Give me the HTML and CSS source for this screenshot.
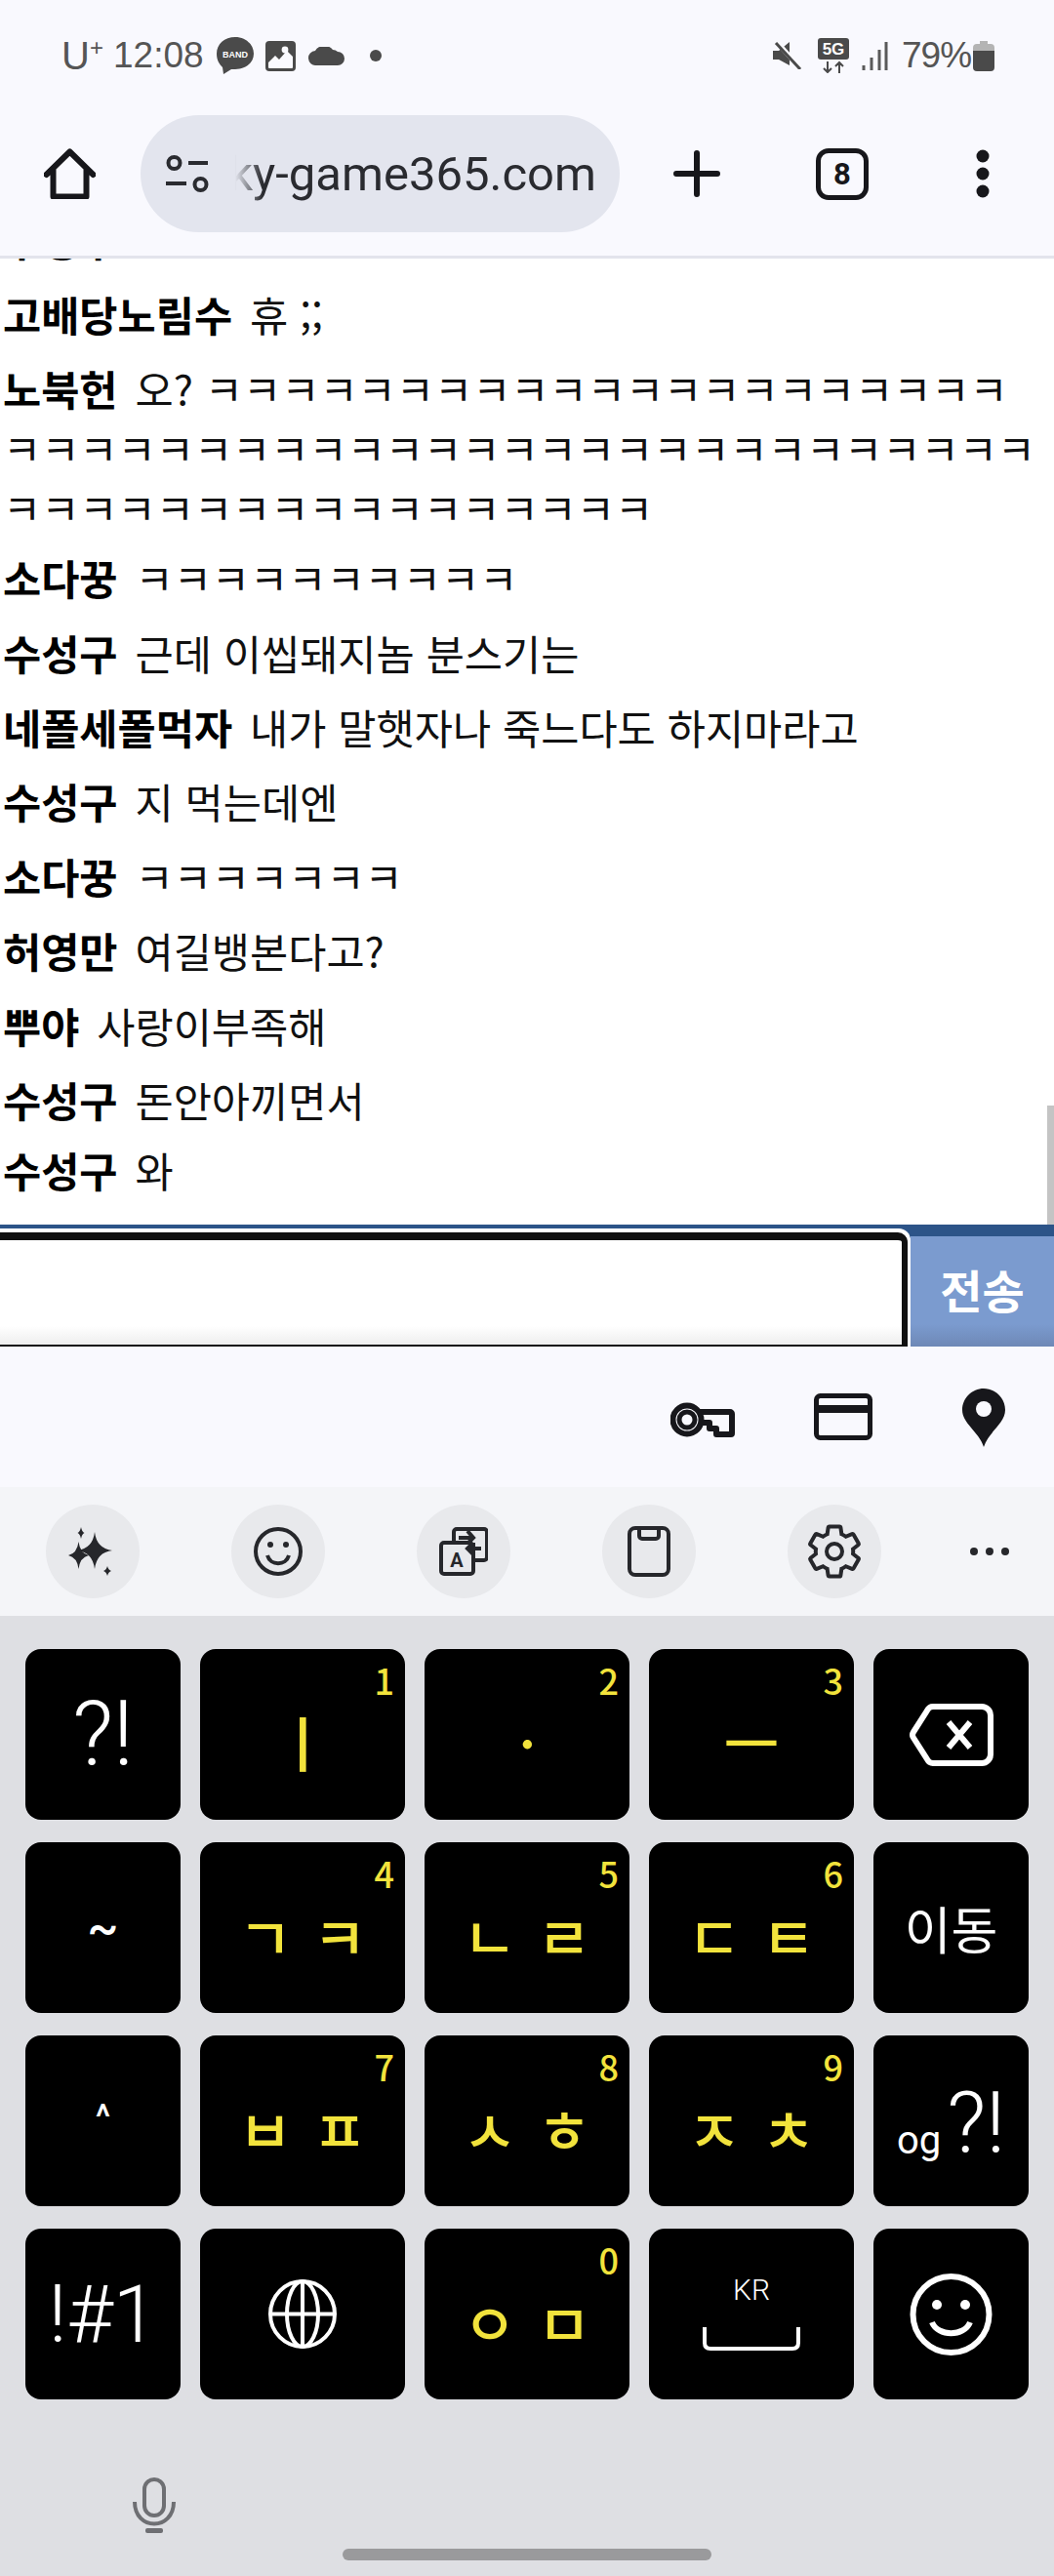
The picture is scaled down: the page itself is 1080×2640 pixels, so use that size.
FILE: index.html
```html
<!DOCTYPE html>
<html lang="ko">
<head>
  <meta charset="UTF-8" />
  <title>sky-game365.com</title>
  <link rel="stylesheet" href="styles.css">
</head>
<body>
  <div class="phone">
    <header class="browser">
      <div class="status">
        <span class="carrier">U<sup>+</sup></span>
        <span class="clock">12:08</span>
        <svg class="st-band" viewBox="0 0 38 38" width="38" height="38"><path d="M19 0C8 0 0 7 0 17c0 7 3 11 6 14l1 7 8-5c1 0 3 0 4 0 11 0 19-7 19-16S30 0 19 0Z" fill="#4a4a4a"/><text x="19" y="21" text-anchor="middle" class="band-text">BAND</text></svg>
        <svg class="st-img" viewBox="0 0 31 31" width="31" height="31"><rect width="31" height="31" rx="4" fill="#4a4a4a"/><rect x="3" y="3" width="25" height="25" rx="1" fill="#fafaff"/><path d="M3 3h25v13l-6-6-8 9-4-4-7 7Z" fill="#4a4a4a"/><circle cx="20" cy="9" r="3.4" fill="#fafaff"/></svg>
        <svg class="st-cloud" viewBox="0 0 37 19" width="37" height="19"><path d="M8 19a7.5 7.5 0 0 1-1-15A11 11 0 0 1 25 3a8 8 0 0 1 5 2 7 7 0 0 1 0 14Z" fill="#4a4a4a"/></svg>
        <span class="st-dot"></span>
        <span class="status-gap"></span>
        <svg class="st-mute" viewBox="0 0 30 28" width="30" height="28"><path d="M0 9h6l11-9v24L6 18H0Z" fill="#4a4a4a"/><path d="M4 0l24 27" stroke="#fafaff" stroke-width="5"/><path d="M3 1l25 27" stroke="#4a4a4a" stroke-width="3"/></svg>
        <svg class="st-5g" viewBox="0 0 32 36" width="32" height="36"><rect width="32" height="22" rx="3" fill="#4a4a4a"/><text x="16" y="17" text-anchor="middle" class="g-text">5G</text><path d="M10 24v11M6 31l4 4 4-4M22 36V25M18 29l4-4 4 4" fill="none" stroke="#4a4a4a" stroke-width="2"/></svg>
        <svg class="st-signal" viewBox="0 0 27 29" width="27" height="29"><path d="M2 29v-5M10 29V16M18 29V8M25 29V0" stroke="#5a5a5a" stroke-width="3"/></svg>
        <span class="battery-text">79%</span>
        <svg class="st-batt" viewBox="0 0 22 31" width="22" height="31"><path d="M7 0h8v3h3a4 4 0 0 1 4 4v5H0V7a4 4 0 0 1 4-4h3Z" fill="#b4b4b4"/><path d="M0 10h22v17a4 4 0 0 1-4 4H4a4 4 0 0 1-4-4Z" fill="#4a4a4a"/></svg>
      </div>
      <nav class="toolbar">
        <svg class="ic-home" viewBox="0 0 53 52" width="53" height="52"><path d="M2.5 27 26.5 3.500 50.5 27M9.5 21v28.500h34V21" fill="none" stroke="#17171b" stroke-width="6" stroke-linejoin="round" stroke-linecap="round"/></svg>
        <div class="pill">
          <svg class="ic-tune" viewBox="0 0 45 38" width="45" height="38"><circle cx="8.500" cy="8" r="6" fill="none" stroke="#2a2b30" stroke-width="4"/><path d="M23 8h20M0 29h21" stroke="#2a2b30" stroke-width="4"/><circle cx="35.500" cy="30" r="6" fill="none" stroke="#2a2b30" stroke-width="4"/></svg>
          <div class="url"><span>sky-game365.com</span></div>
        </div>
        <svg class="ic-plus" viewBox="0 0 48 48" width="48" height="48"><path d="M24 3v42M3 24h42" stroke="#17171b" stroke-width="6" stroke-linecap="round"/></svg>
        <div class="tabs">8</div>
        <svg class="ic-more" viewBox="0 0 14 50" width="14" height="50"><circle cx="7" cy="7" r="6.500"/><circle cx="7" cy="25" r="6.500"/><circle cx="7" cy="43" r="6.500"/></svg>
      </nav>
    </header>

    <main class="chat">
      <p class="msg"><b>수성구</b> ㅋ?</p>
      <p class="msg"><b>고배당노림수</b> 휴 ;;</p>
      <p class="msg tight"><b>노북헌</b> 오? ㅋㅋㅋㅋㅋㅋㅋㅋㅋㅋㅋㅋㅋㅋㅋㅋㅋㅋㅋㅋㅋㅋㅋㅋㅋㅋㅋㅋㅋㅋㅋㅋㅋㅋㅋㅋㅋㅋㅋㅋㅋㅋㅋㅋㅋㅋㅋㅋㅋㅋㅋㅋㅋㅋㅋㅋㅋㅋㅋㅋㅋㅋㅋㅋㅋ</p>
      <p class="msg"><b>소다꿍</b> ㅋㅋㅋㅋㅋㅋㅋㅋㅋㅋ</p>
      <p class="msg"><b>수성구</b> 근데 이씹돼지놈 분스기는</p>
      <p class="msg"><b>네폴세폴먹자</b> 내가 말햇자나 죽느다도 하지마라고</p>
      <p class="msg"><b>수성구</b> 지 먹는데엔</p>
      <p class="msg"><b>소다꿍</b> ㅋㅋㅋㅋㅋㅋㅋ</p>
      <p class="msg"><b>허영만</b> 여길뱅본다고?</p>
      <p class="msg"><b>뿌야</b> 사랑이부족해</p>
      <p class="msg tight"><b>수성구</b> 돈안아끼면서</p>
      <p class="msg last"><b>수성구</b> 와</p>
      <div class="scroll-thumb"></div>
    </main>

    <form class="send-bar">
      <div class="input-wrap"><div class="input-box"></div></div>
      <div class="send-btn">전송</div>
    </form>

    <div class="autofill">
      <svg class="ic-key" viewBox="0 0 66 36" width="66" height="36"><circle cx="17" cy="18" r="8" fill="none" stroke="#17171b" stroke-width="5"/><circle cx="17" cy="18" r="14.500" fill="none" stroke="#17171b" stroke-width="6"/><path d="M30 10h31a2 2 0 0 1 2 2v20a1 1 0 0 1-1 1H47v-6h-7v-6H31" fill="none" stroke="#17171b" stroke-width="6" stroke-linejoin="round"/></svg>
      <svg class="ic-card" viewBox="0 0 60 48" width="60" height="48"><rect x="2.500" y="2.500" width="55" height="43" rx="4" fill="none" stroke="#17171b" stroke-width="5"/><rect x="2" y="12" width="56" height="8" fill="#17171b"/></svg>
      <svg class="ic-pin" viewBox="0 0 44 60" width="44" height="60"><path d="M22 0C10 0 0 10 0 22c0 14 17 22 22 38 5-16 22-24 22-38C44 10 34 0 22 0Z" fill="#17171b"/><circle cx="22" cy="21" r="8" fill="#f9f9fe"/></svg>
    </div>

    <div class="kb-tools">
      <span class="tool"><svg viewBox="0 0 50 52" width="50" height="52" class="ink"><path d="M27 6Q29 23 45 25 29 27 27 44 25 27 9 25 25 23 27 6Z"/><path d="M10.500 16Q12 28 21 30 12 32 10.500 44 9 32 0 30 9 28 10.500 16Z"/><path d="M13 1Q14 6 16.500 7 14 8 13 13 12 8 9.500 7 12 6 13 1Z"/><path d="M40 41Q41 45 44 46 41 47 40 51 39 47 36 46 39 45 40 41Z"/></svg></span>
      <span class="tool"><svg viewBox="0 0 50 52" width="50" height="52" class="line"><circle cx="25" cy="26" r="23"/><path d="M14 30c3 11 19 11 22 0"/><circle class="eye" cx="17" cy="19" r="3"/><circle class="eye" cx="33" cy="19" r="3"/></svg></span>
      <span class="tool"><svg viewBox="0 0 50 50" width="50" height="50" class="line"><path d="M15 14V5a3 3 0 0 1 3-3h28a3 3 0 0 1 3 3v26a3 3 0 0 1-3 3h-9M20 11h14M29 4l6 7-6 6"/><path d="M35 16v29a3 3 0 0 1-3 3H5a3 3 0 0 1-3-3V19a3 3 0 0 1 3-3h26M43 22H30M35 16l-6 6 6 6"/><text x="18" y="41" text-anchor="middle" class="a-text">A</text></svg></span>
      <span class="tool"><svg viewBox="0 0 44 52" width="44" height="52" class="line"><rect x="2" y="2" width="40" height="48" rx="6"/><path d="M12 2v8a3 3 0 0 0 3 3h14a3 3 0 0 0 3-3V2"/></svg></span>
      <span class="tool"><svg viewBox="0 0 24 24" width="64" height="64" class="line thin"><path d="M19.140 12.940c.04-.3.06-.61.06-.94 0-.32-.02-.64-.07-.94l2.030-1.580a.49.49 0 0 0 .12-.61l-1.920-3.320a.488.488 0 0 0-.59-.22l-2.390.96c-.5-.38-1.030-.7-1.620-.94l-.36-2.540a.484.484 0 0 0-.48-.41h-3.840c-.24 0-.43.17-.47.41l-.36 2.540c-.59.24-1.130.57-1.620.94l-2.390-.96c-.22-.08-.47 0-.59.22L2.740 8.870c-.12.21-.08.47.12.61l2.030 1.580c-.05.3-.09.63-.09.94s.02.64.07.94l-2.030 1.580a.49.49 0 0 0-.12.61l1.920 3.320c.12.22.37.29.59.22l2.390-.96c.5.38 1.030.7 1.620.94l.36 2.540c.05.24.24.41.48.41h3.840c.24 0 .44-.17.47-.41l.36-2.540c.59-.24 1.130-.56 1.620-.94l2.390.96c.22.08.47 0 .59-.22l1.920-3.320c.12-.22.07-.47-.12-.61l-2.010-1.580z"/><circle cx="12" cy="12" r="3"/></svg></span>
      <svg class="tool-more" viewBox="0 0 42 10" width="42" height="10"><circle cx="5" cy="5" r="4"/><circle cx="21" cy="5" r="4"/><circle cx="37" cy="5" r="4"/></svg>
    </div>

    <section class="keyboard">
      <div class="keys">
        <div class="key white qm">?!</div>
        <div class="key jamo single"><i>1</i><span>ㅣ</span></div>
        <div class="key jamo single"><i>2</i><span>ㆍ</span></div>
        <div class="key jamo single"><i>3</i><span>ㅡ</span></div>
        <div class="key"><svg viewBox="0 0 86 64" width="86" height="64" class="key-line"><path d="M24 3h50a9 9 0 0 1 9 9v40a9 9 0 0 1-9 9H24q-4 0-6-4L4 35q-2-3 0-6L18 7q2-4 6-4Z"/><path d="M40 19 62 45M62 19 40 45"/></svg></div>

        <div class="key white tilde">~</div>
        <div class="key jamo"><i>4</i><span>ㄱ</span><span>ㅋ</span></div>
        <div class="key jamo"><i>5</i><span>ㄴ</span><span>ㄹ</span></div>
        <div class="key jamo"><i>6</i><span>ㄷ</span><span>ㅌ</span></div>
        <div class="key white move">이동</div>

        <div class="key white caret">^</div>
        <div class="key jamo"><i>7</i><span>ㅂ</span><span>ㅍ</span></div>
        <div class="key jamo"><i>8</i><span>ㅅ</span><span>ㅎ</span></div>
        <div class="key jamo"><i>9</i><span>ㅈ</span><span>ㅊ</span></div>
        <div class="key white punct"><small>og</small><span>?!</span></div>

        <div class="key white sym">!#1</div>
        <div class="key"><svg viewBox="0 0 70 71" width="70" height="71" class="key-line thin"><ellipse cx="35" cy="35.500" rx="33" ry="33.500"/><ellipse cx="35" cy="35.500" rx="16" ry="33.500"/><path d="M35 2v67M2 35.500h66"/></svg></div>
        <div class="key jamo"><i>0</i><span>ㅇ</span><span>ㅁ</span></div>
        <div class="key space">
          <span class="lang">KR</span>
          <svg viewBox="0 0 100 24" width="100" height="24" class="key-line thin"><path d="M2 0v16q0 6 6 6h84q6 0 6-6V0"/></svg>
        </div>
        <div class="key"><svg viewBox="0 0 85 84" width="85" height="84" class="key-line"><circle cx="42.500" cy="42" r="39"/><path d="M23 50c6 15 33 15 39 0"/><circle class="eye" cx="28" cy="32" r="5"/><circle class="eye" cx="57" cy="32" r="5"/></svg></div>
      </div>
      <svg class="ic-mic" viewBox="0 0 44 57" width="44" height="57"><rect x="12" y="2" width="20" height="37" rx="10" fill="none" stroke="#6e6f73" stroke-width="4"/><path d="M2 25c0 30 40 30 40 0" fill="none" stroke="#6e6f73" stroke-width="4"/><rect x="13" y="52" width="18" height="5" rx="2" fill="#6e6f73"/></svg>
      <div class="home-bar"></div>
    </section>
  </div>
</body>
</html>
```

FILE: styles.css
```css
:root {
  --bar-bg: #f9f9fe;
  --ink: #17171b;
  --status: #555;
  --key-yellow: #f2e33c;
  --kb-bg: #dedfe3;
}

* {
  box-sizing: border-box;
}

body {
  margin: 0;
  background: #fff;
  font-family: "Noto Sans CJK KR", "Noto Sans", sans-serif;
}

.phone {
  width: 1080px;
  height: 2640px;
  display: flex;
  flex-direction: column;
  overflow: hidden;
}

/* browser chrome */
.browser {
  height: 265px;
  background: var(--bar-bg);
  border-bottom: 3px solid #e3e4ec;
}

.status {
  height: 114px;
  display: flex;
  align-items: center;
  padding-left: 63px;
  color: var(--status);
  font-family: "Liberation Sans", sans-serif;
  font-size: 37px;
}

.carrier {
  width: 53px;
  font-size: 40px;
}

.carrier sup {
  font-size: 24px;
  line-height: 0;
}

.clock {
  width: 106px;
}

.st-cloud {
  margin-left: 13px;
}

.st-img {
  margin-left: 12px;
}

.st-dot {
  width: 12px;
  height: 12px;
  margin-left: 26px;
  border-radius: 50%;
  background: #4a4a4a;
}

.status-gap {
  flex: 1;
}

.st-5g {
  margin-left: 16px;
}

.st-signal {
  margin-left: 13px;
}

.battery-text {
  margin-left: 14px;
  width: 73px;
  letter-spacing: -1px;
}

.st-batt {
  margin-right: 61px;
}

.band-text {
  font-family: "Liberation Sans", sans-serif;
  font-size: 9px;
  font-weight: 700;
  fill: #fff;
}

.g-text {
  font-family: "Liberation Sans", sans-serif;
  font-size: 17px;
  font-weight: 700;
  fill: #fff;
}

.toolbar {
  display: flex;
  align-items: center;
  height: 120px;
  margin-top: 4px;
}

.ic-home {
  margin-left: 45px;
}

.pill {
  width: 491px;
  height: 120px;
  margin-left: 46px;
  padding-left: 26px;
  border-radius: 60px;
  background: #e3e5ee;
  display: flex;
  align-items: center;
}

.url {
  width: 370px;
  margin-left: 26px;
  display: flex;
  justify-content: flex-end;
  overflow: hidden;
  white-space: nowrap;
  font-family: Roboto, sans-serif;
  font-size: 49px;
  color: #2a2b30;
  -webkit-mask-image: linear-gradient(90deg, transparent 0, #000 28px);
  mask-image: linear-gradient(90deg, transparent 0, #000 28px);
}

.ic-plus {
  margin-left: 55px;
}

.tabs {
  width: 54px;
  height: 53px;
  margin-left: 98px;
  border: 5px solid var(--ink);
  border-radius: 13px;
  display: flex;
  align-items: center;
  justify-content: center;
  font-family: Roboto, sans-serif;
  font-size: 31px;
  font-weight: 700;
  color: var(--ink);
}

.ic-more {
  margin-left: 110px;
  fill: var(--ink);
}

/* chat */
.chat {
  position: relative;
  height: 990px;
  padding: 0 15px 26px 3px;
  display: flex;
  flex-direction: column;
  justify-content: flex-end;
  overflow: hidden;
}

.msg {
  flex: none;
  margin: 0 0 15.4px;
  font-size: 42.6px;
  line-height: 61px;
  color: #111;
  word-break: break-all;
}

.msg b {
  margin-right: 6px;
  color: #000;
}

.msg.tight {
  margin-bottom: 11px;
}

.msg.last {
  margin: 0;
}

.scroll-thumb {
  position: absolute;
  right: 0;
  bottom: 0;
  width: 7px;
  height: 122px;
  background: #c4c4c4;
}

.send-bar {
  height: 125px;
  margin: 0;
  background: #2c5488;
  display: flex;
  align-items: flex-end;
  overflow: hidden;
}

.input-wrap {
  width: 943px;
  height: 121px;
  margin-left: -10px;
  background: #fff;
  border-radius: 0 12px 0 0;
  padding: 4px 3px 0 0;
}

.input-box {
  height: 117px;
  border: solid #111;
  border-width: 8px 6px 2px;
  border-radius: 10px 10px 0 0;
  background: linear-gradient(#fff 88px, #eee);
}

.send-btn {
  flex: 1;
  height: 113px;
  background: linear-gradient(#7b9bcf 90px, #6e88b6);
  color: #fff;
  font-size: 47px;
  font-weight: 700;
  display: flex;
  align-items: center;
  justify-content: center;
  padding-bottom: 6px;
}

.autofill {
  height: 144px;
  background: var(--bar-bg);
  display: flex;
  align-items: center;
}

.ic-key {
  margin: 6px 0 0 687px;
}

.ic-card {
  margin-left: 81px;
}

.ic-pin {
  margin-left: 92px;
  margin-top: 2px;
}

.kb-tools {
  height: 132px;
  background: #f4f5f8;
  display: flex;
  align-items: center;
  gap: 94px;
  padding-left: 47px;
}

.tool {
  width: 96px;
  height: 96px;
  border-radius: 50%;
  background: #e8e9ec;
  display: flex;
  align-items: center;
  justify-content: center;
}

.ink {
  fill: #26272b;
}

.line {
  fill: none;
  stroke: #26272b;
  stroke-width: 4;
}

.line.thin {
  stroke-width: 1.5;
}

.line .eye {
  fill: #26272b;
  stroke: none;
}

.a-text {
  font-family: Roboto, sans-serif;
  font-size: 20px;
  font-weight: 700;
  fill: #26272b;
  stroke: none;
}

.tool-more {
  margin-left: -4px;
  fill: #26272b;
}

/* keyboard */
.keyboard {
  position: relative;
  flex: 1;
  background: var(--kb-bg);
  padding-top: 34px;
}

.keys {
  display: grid;
  grid-template-columns: 159px 210px 210px 210px 159px;
  grid-auto-rows: 175px;
  gap: 23px 20px;
  padding: 0 26px;
}

.key {
  position: relative;
  background: #000;
  border-radius: 16px;
  display: flex;
  align-items: center;
  justify-content: center;
  color: #fff;
  font-family: Roboto, "Noto Sans CJK KR", sans-serif;
  font-weight: 300;
}

.key i {
  position: absolute;
  top: 12px;
  right: 11px;
  font-style: normal;
  font-size: 36px;
  line-height: 1.1;
  color: var(--key-yellow);
}

.jamo {
  gap: 21px;
  padding-top: 13px;
  color: var(--key-yellow);
  font-family: "Noto Sans CJK KR", sans-serif;
  font-size: 60px;
  font-weight: 500;
}

.jamo.single {
  font-size: 62px;
}

.qm {
  font-size: 92px;
}

.tilde {
  font-size: 48px;
  font-weight: 500;
}

.caret {
  font-size: 36px;
  font-weight: 500;
  padding-bottom: 8px;
}

.move {
  font-family: "Noto Sans CJK KR", sans-serif;
  font-size: 52px;
  font-weight: 400;
}

.punct {
  font-size: 88px;
  padding-top: 4px;
}

.punct small {
  font-size: 40px;
  font-weight: 400;
  align-self: flex-end;
  margin-bottom: 44px;
  margin-right: 6px;
}

.sym {
  font-size: 82px;
}

.space {
  flex-direction: column;
  gap: 26px;
}

.lang {
  font-size: 30px;
  line-height: 24px;
}

.key-line {
  fill: none;
  stroke: #fff;
  stroke-width: 6;
}

.key-line.thin {
  stroke-width: 4;
}

.key-line .eye {
  fill: #fff;
  stroke: none;
}

.ic-mic {
  position: absolute;
  left: 136px;
  top: 883px;
}

.home-bar {
  position: absolute;
  left: 351px;
  top: 956px;
  width: 378px;
  height: 12px;
  border-radius: 6px;
  background: #9a9a9c;
}
```
